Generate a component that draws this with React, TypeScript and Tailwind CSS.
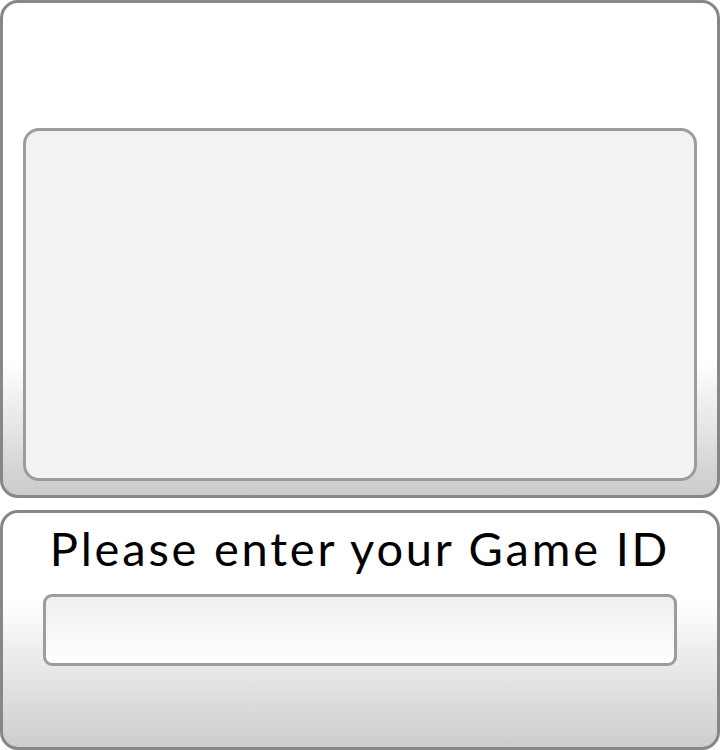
import React from "react";

const App = () => {
  return (
    <div className="w-[720px] h-[750px] flex flex-col gap-[12px] bg-white font-['Lato','Liberation_Sans',sans-serif]">
      <div className="h-[498px] rounded-[18px] border-[3px] border-[#878787] bg-gradient-to-b from-white from-[73%] to-[#cbcbcb] px-[20px] pt-[125px] pb-[14px]">
        <div className="h-full rounded-[16px] border-[3px] border-[#9c9c9c] bg-[#f2f2f2]" />
      </div>
      <div className="h-[240px] rounded-[18px] border-[3px] border-[#878787] bg-gradient-to-b from-white from-[38%] to-[#cdcdcd] px-[40px] flex flex-col">
        <h1 className="text-center text-[47px] leading-none text-black mt-[12px] tracking-[2.8px]">
          Please enter your Game ID
        </h1>
        <input
          type="text"
          className="mt-[22px] h-[72px] w-full rounded-[9px] border-[3px] border-[#9c9c9c] bg-gradient-to-b from-[#efefef] to-white outline-none"
        />
      </div>
    </div>
  );
};

export default App;
